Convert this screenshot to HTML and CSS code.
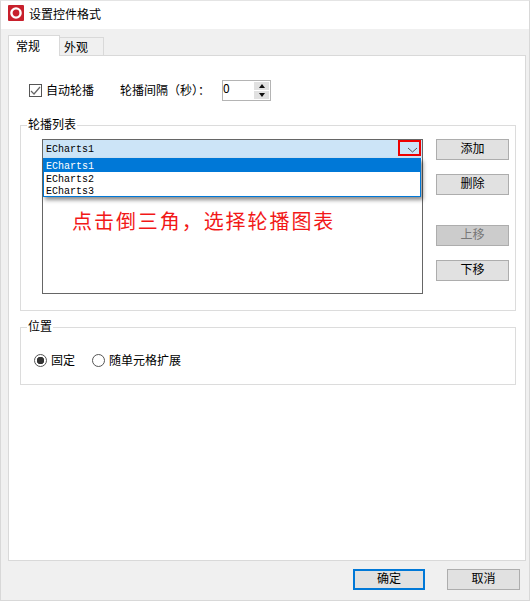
FILE: index.html
```html
<!DOCTYPE html>
<html lang="zh-CN">
<head>
  <meta charset="UTF-8">
  <title>设置控件格式</title>
  <link rel="stylesheet" href="styles.css">
</head>
<body>
  <div class="dialog">
    <div class="titlebar">
      <svg class="logo" width="16" height="16" viewBox="0 0 16 16">
        <rect width="16" height="16" rx="1" fill="#c8202c"/>
        <circle cx="8" cy="8" r="4.6" fill="none" stroke="#fff" stroke-width="2.4"/>
      </svg>
      <span>设置控件格式</span>
    </div>

    <div class="tabs">
      <div class="tab active">常规</div>
      <div class="tab">外观</div>
    </div>

    <div class="panel">
      <div class="auto-row">
        <span class="check">
          <svg width="11" height="11" viewBox="0 0 11 11">
            <path d="M1 6 L4 9 L10 2" fill="none" stroke="#666" stroke-width="1.2"/>
          </svg>
        </span>
        <label class="check-label">自动轮播</label>
        <label class="interval-label">轮播间隔（秒）：</label>
        <div class="spin">
          <span class="spin-value">0</span>
          <div class="spin-btns">
            <span class="spin-btn"><i class="arrow-up"></i></span>
            <span class="spin-btn"><i class="arrow-down"></i></span>
          </div>
        </div>
      </div>

      <fieldset class="group list-group">
        <legend>轮播列表</legend>
        <div class="list-row">
          <div class="listbox">
            <div class="combo">
              <span>ECharts1</span>
              <svg class="chevron" width="11" height="6" viewBox="0 0 11 6">
                <path d="M1 1 L5.5 5 L10 1" fill="none" stroke="#555" stroke-width="1"/>
              </svg>
            </div>
            <div class="marker"></div>
            <ul class="dropdown">
              <li class="selected">ECharts1</li>
              <li>ECharts2</li>
              <li>ECharts3</li>
            </ul>
            <p class="hint">点击倒三角，选择轮播图表</p>
          </div>
          <div class="side-btns">
            <button class="btn">添加</button>
            <button class="btn btn-del">删除</button>
            <button class="btn btn-up" disabled>上移</button>
            <button class="btn btn-down">下移</button>
          </div>
        </div>
      </fieldset>

      <fieldset class="group pos-group">
        <legend>位置</legend>
        <div class="radio-row">
          <span class="radio on"></span>
          <label class="radio-label">固定</label>
          <span class="radio"></span>
          <label>随单元格扩展</label>
        </div>
      </fieldset>
    </div>

    <div class="footer">
      <button class="btn btn-ok">确定</button>
      <button class="btn">取消</button>
    </div>
  </div>
</body>
</html>
```

FILE: styles.css
```css
* {
  box-sizing: border-box;
}

html, body {
  margin: 0;
  height: 100%;
}

body {
  font-family: "Noto Sans CJK SC", "Liberation Sans", sans-serif;
  font-size: 12px;
  line-height: 14px;
  color: #000;
  background: #f0f0f0;
  overflow: hidden;
}

.dialog {
  width: 530px;
  height: 601px;
  border: 1px solid #d8d8d8;
  border-top-color: #e4e4e4;
}

.titlebar {
  display: flex;
  align-items: center;
  height: 28px;
  padding: 0 0 2px 7px;
  background: #fff;
}

.logo {
  margin: -2px 5px 0 0;
}

.tabs {
  display: flex;
  align-items: flex-end;
  height: 26px;
  padding-left: 7px;
}

.tab {
  width: 44px;
  height: 18px;
  padding: 2px 0 0 4px;
  background: #f0f0f0;
  border: 1px solid #d9d9d9;
  border-bottom: none;
  border-left: none;
}

.tab.active {
  width: 52px;
  height: 21px;
  padding: 3px 0 0 7px;
  background: #fff;
  border-left: 1px solid #d9d9d9;
  margin-bottom: -1px;
  position: relative;
}

.panel {
  width: 518px;
  height: 506px;
  margin-left: 7px;
  padding: 24px 5px 0 11px;
  background: #fff;
  border: 1px solid #d9d9d9;
}

.auto-row {
  display: flex;
  align-items: center;
  height: 21px;
  padding-left: 9px;
}

.check {
  display: flex;
  align-items: center;
  justify-content: center;
  width: 13px;
  height: 13px;
  margin-right: 4px;
  border: 1px solid #555;
}

.check-label {
  width: 74px;
  padding-bottom: 2px;
}

.interval-label {
  width: 102px;
  padding-bottom: 2px;
}

.spin {
  display: flex;
  justify-content: space-between;
  width: 49px;
  height: 21px;
  padding: 1px 1px 1px 0;
  border: 1px solid #b4b4b4;
}

.spin-value {
  line-height: 12px;
}

.spin-btns {
  display: flex;
  flex-direction: column;
  gap: 1px;
  width: 15px;
}

.spin-btn {
  display: flex;
  align-items: center;
  justify-content: center;
  flex: 1;
  background: #e1e1e1;
}

.arrow-up, .arrow-down {
  width: 0;
  height: 0;
  border-left: 3.5px solid transparent;
  border-right: 3.5px solid transparent;
}

.arrow-up {
  border-bottom: 4px solid #111;
}

.arrow-down {
  border-top: 4px solid #111;
}

.group {
  margin: 0;
  padding: 0;
  border: 1px solid #dcdcdc;
  min-width: 0;
}

.group legend {
  padding: 0 1px 2px;
  margin-left: 6px;
  line-height: 12px;
}

.list-group {
  width: 496px;
  height: 193px;
  margin-top: 17px;
}

.list-row {
  display: flex;
  padding: 7px 0 0 21px;
}

.listbox {
  position: relative;
  width: 381px;
  height: 155px;
  background: #fff;
  border: 1px solid #666;
}

.combo {
  display: flex;
  align-items: center;
  justify-content: space-between;
  height: 18px;
  padding: 2px 4px 0 3px;
  background: #cce4f7;
  font-family: "Liberation Mono", monospace;
  font-size: 10px;
  color: #000;
}

.chevron {
  margin-top: -1px;
}

/* 红框，标出下拉按钮 */
.marker {
  position: absolute;
  top: 0;
  right: 1px;
  width: 23px;
  height: 16px;
  border: 2px solid #ee0000;
}

.dropdown {
  position: absolute;
  top: 18px;
  left: 0;
  width: 378px;
  margin: 0;
  padding: 0;
  list-style: none;
  background: #fff;
  border: 1px solid #0078d7;
  box-shadow: 2px 3px 4px rgba(0, 0, 0, 0.45);
  font-family: "Liberation Mono", monospace;
  font-size: 10px;
  line-height: 12px;
  color: #000;
}

.dropdown li {
  height: 12px;
  padding: 2px 0 0 2px;
}

.dropdown .selected {
  height: 13px;
  background: #0078d7;
  color: #fff;
}

.hint {
  margin: 50px 0 0 29px;
  font-size: 20px;
  line-height: 26px;
  letter-spacing: 1.94px;
  color: #f21818;
}

.side-btns {
  display: flex;
  flex-direction: column;
  margin-left: 13px;
}

.btn {
  width: 73px;
  height: 21px;
  padding: 0 0 4px;
  font-family: inherit;
  font-size: 12px;
  line-height: 14px;
  color: #000;
  background: #e1e1e1;
  border: 1px solid #adadad;
}

.btn-del {
  margin-top: 14px;
}

.btn-up {
  margin-top: 30px;
  background: #cccccc;
  color: #777;
}

.btn-down {
  margin-top: 14px;
}

.pos-group {
  width: 496px;
  height: 65px;
  margin-top: 9px;
}

.radio-row {
  display: flex;
  align-items: center;
  padding: 19px 0 0 13px;
}

.radio {
  width: 13px;
  height: 13px;
  margin-right: 4px;
  border: 1px solid #555;
  border-radius: 50%;
  background: #fff;
}

.radio.on {
  background: radial-gradient(circle, #333 0, #333 3.5px, #fff 4px);
}

.radio-label {
  width: 41px;
}

.footer {
  display: flex;
  justify-content: flex-end;
  gap: 22px;
  padding: 8px 9px 0 0;
}

.btn-ok {
  width: 72px;
  border: 2px solid #0078d7;
}
```
